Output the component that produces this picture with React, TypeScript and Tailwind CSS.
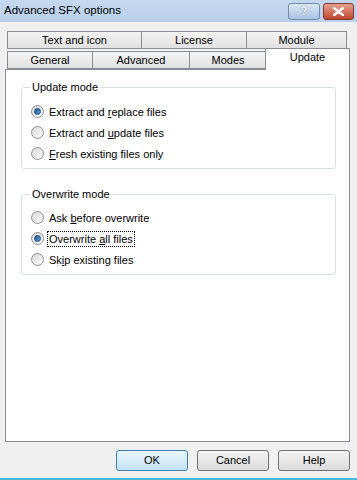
import React from "react";

const font = { fontFamily: '"Liberation Sans", Arial, sans-serif' };

const Radio = ({ checked, label, ul, focus }: { checked?: boolean; label: string; ul: number; focus?: boolean }) => (
  <div className="flex items-center h-[21px]">
    <span className="relative w-[13px] h-[13px] rounded-full border border-[#8e8f8f] bg-gradient-to-br from-[#d8d8d8] to-[#fbfbfb] flex items-center justify-center">
      {checked && (
        <span className="w-[7px] h-[7px] rounded-full bg-gradient-to-br from-[#1c5590] to-[#57a7e3] border border-[#19477a]" />
      )}
    </span>
    <span className={`ml-[4px] px-[1px] leading-[14px] ${focus ? "outline outline-1 outline-dotted outline-black" : ""}`}>
      {label.slice(0, ul)}
      <span className="underline">{label[ul]}</span>
      {label.slice(ul + 1)}
    </span>
  </div>
);

const Tab = ({ label, w }: { label: string; w: string }) => (
  <div className={`${w} h-[18px] border border-[#898c95] -ml-[1px] first:ml-0 bg-gradient-to-b from-[#f3f3f3] to-[#e1e1e1] flex items-center justify-center leading-none`}>
    {label}
  </div>
);

const Button = ({ label, primary }: { label: string; primary?: boolean }) => (
  <button
    className={`w-[72px] h-[21px] rounded-[3px] border flex items-center justify-center ${
      primary
        ? "border-[#3c7fb1] bg-gradient-to-b from-[#e9f5fc] to-[#c4e3f6]"
        : "border-[#707070] bg-gradient-to-b from-[#f2f2f2] to-[#dcdcdc]"
    }`}
  >
    {label}
  </button>
);

export default function App() {
  return (
    <div className="w-[357px] h-[480px] bg-[#f0f0f0] flex flex-col text-[11px] text-black overflow-hidden" style={font}>
      <div className="h-[22px] bg-gradient-to-b from-[#c4d8ee] to-[#b9cfe9] flex items-center pl-[4px] pr-[3px]">
        <span className="text-[11.5px] text-black">Advanced SFX options</span>
        <div className="ml-auto flex gap-[3px]">
          <div className="w-[32px] h-[17px] rounded-[3px] border border-[#6d8bae] bg-gradient-to-b from-[#dbe7f5] to-[#a9c3e2] flex items-center justify-center text-[12px] font-bold text-white [text-shadow:0_0_1px_#333]">
            ?
          </div>
          <div className="w-[31px] h-[17px] rounded-[3px] border border-[#853a2d] bg-gradient-to-b from-[#e7a08f] to-[#c2432b] flex items-center justify-center">
            <svg width="11" height="9" viewBox="0 0 11 9">
              <path d="M1 1 L10 8 M10 1 L1 8" stroke="#fff" strokeWidth="2.4" strokeLinecap="round" />
            </svg>
          </div>
        </div>
      </div>

      <div className="mt-[9px] pl-[7px] flex">
        <Tab label="Text and icon" w="w-[135px]" />
        <Tab label="License" w="w-[106px]" />
        <Tab label="Module" w="w-[101px]" />
      </div>
      <div className="pl-[7px] flex items-end -mt-[1px]">
        <Tab label="General" w="w-[86px]" />
        <Tab label="Advanced" w="w-[98px]" />
        <Tab label="Modes" w="w-[78px]" />
        <div className="w-[85px] h-[22px] -ml-[2px] -mb-[1px] relative z-10 bg-white border border-b-0 border-[#898c95] flex justify-center pt-[3px] leading-none">
          Update
        </div>
      </div>

      <div className="mx-[5px] w-[345px] h-[373px] bg-white border border-[#898c95] pl-[15px] pr-[13px] pt-[9px]">
        <fieldset className="border border-[#d5dfe5] rounded-[3px] pl-[9px] pt-[6px] pb-[4px]">
          <legend className="px-[2px] -ml-[1px] leading-[16px]">Update mode</legend>
          <Radio checked label="Extract and replace files" ul={12} />
          <Radio label="Extract and update files" ul={12} />
          <Radio label="Fresh existing files only" ul={0} />
        </fieldset>
        <fieldset className="mt-[17px] border border-[#d5dfe5] rounded-[3px] pl-[9px] pt-[5px] pb-[4px]">
          <legend className="px-[2px] -ml-[1px] leading-[16px]">Overwrite mode</legend>
          <Radio label="Ask before overwrite" ul={4} />
          <Radio checked focus label="Overwrite all files" ul={10} />
          <Radio label="Skip existing files" ul={2} />
        </fieldset>
      </div>

      <div className="mt-[8px] flex justify-end gap-[9px] pr-[7px]">
        <Button primary label="OK" />
        <Button label="Cancel" />
        <Button label="Help" />
      </div>

      <div className="mt-auto h-[2px] bg-[#47b9e0]" />
    </div>
  );
}
